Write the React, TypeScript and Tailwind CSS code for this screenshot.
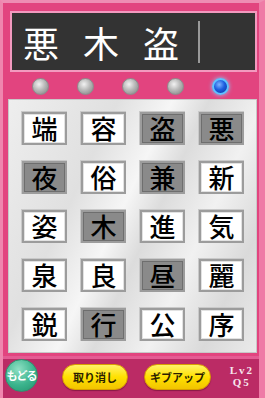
import React from 'react';

const ROWS: { ch: string; on?: boolean }[][] = [
  [{ ch: '端' }, { ch: '容' }, { ch: '盗', on: true }, { ch: '悪', on: true }],
  [{ ch: '夜', on: true }, { ch: '俗' }, { ch: '兼', on: true }, { ch: '新' }],
  [{ ch: '姿' }, { ch: '木', on: true }, { ch: '進' }, { ch: '気' }],
  [{ ch: '泉' }, { ch: '良' }, { ch: '昼', on: true }, { ch: '麗' }],
  [{ ch: '鋭' }, { ch: '行', on: true }, { ch: '公' }, { ch: '序' }],
];

const KANJI = { fontFamily: '"Noto Sans CJK JP", sans-serif' };

function Light({ active }: { active?: boolean }) {
  return (
    <div
      className={
        active
          ? 'w-[17px] h-[17px] rounded-full border-2 border-[#5fc2ff] bg-[radial-gradient(circle_at_40%_35%,#7fb4ff_0%,#1d5fe0_45%,#0a2f9a_100%)] shadow-[0_0_4px_#7fd0ff]'
          : 'w-[17px] h-[17px] rounded-full border border-[#8d8d8d] bg-[radial-gradient(circle_at_40%_35%,#f2f2f2_0%,#b9b9b9_45%,#7d7d7d_100%)]'
      }
    />
  );
}

function Tile({ ch, on }: { ch: string; on?: boolean }) {
  return (
    <div className="w-[46px] h-[34px] p-[2px] bg-[#9c9c9c] border-t border-l border-[#c9c9c9] border-b-[#777] border-r-[#777]">
      <div
        className={
          'w-full h-full flex items-center justify-center border ' +
          (on ? 'bg-[#8a8a8a] border-[#6e6e6e]' : 'bg-white border-[#e2e2e2]')
        }
      >
        <span className="text-[26px] leading-none text-black font-medium" style={KANJI}>
          {ch}
        </span>
      </div>
    </div>
  );
}

export default function App() {
  return (
    <div className="w-[265px] h-[398px] overflow-hidden flex flex-col bg-[#e2447f] border-t-[3px] border-t-[#ee8db3] border-l-[3px] border-l-[#ef86ae] border-r-[6px] border-r-[#ee7aa6]">
      {/* Display */}
      <div className="pt-[8px] pl-[7px] pr-[2px]">
        <div className="h-[61px] bg-[#333333] border-2 border-[#f29abf] flex items-center">
          <div className="flex items-center pl-[11px] gap-[24px] text-white text-[36px] leading-none" style={KANJI}>
            <span>悪</span>
            <span>木</span>
            <span>盗</span>
          </div>
          <div className="ml-[19px] w-[2px] h-[42px] bg-[#9a9a9a]" />
        </div>
      </div>

      {/* Progress lights */}
      <div className="h-[27px] pt-[2px] flex items-center pl-[29px] gap-[28px]">
        <Light />
        <Light />
        <Light />
        <Light />
        <Light active />
      </div>

      {/* Board */}
      <div className="ml-[5px] mr-[2px] h-[255px] border border-[#c8c8c8] bg-[linear-gradient(115deg,#eeeeee_0%,#e0e0e0_30%,#f6f6f6_45%,#dcdcdc_55%,#f1f1f1_70%,#dadada_85%,#eaeaea_100%)] pt-[11px] pl-[12px] flex flex-col gap-[15px]">
        {ROWS.map((row, i) => (
          <div key={i} className="flex gap-[13px]">
            {row.map((t) => (
              <Tile key={t.ch} ch={t.ch} on={t.on} />
            ))}
          </div>
        ))}
      </div>

      {/* Bottom bar */}
      <div className="mt-[3px] flex-1 bg-[#bb2b65] border-t-[3px] border-t-[#e45b93] flex items-center pl-[2px] pr-[4px] pb-[6px]">
        <div
          className="w-[33px] h-[33px] rounded-full bg-[radial-gradient(circle_at_40%_30%,#8fe0c4_0%,#3bb48d_55%,#23916c_100%)] border border-[#2f8f6f] flex items-center justify-center text-white text-[11px] font-bold tracking-[-1px]"
          style={KANJI}
        >
          もどる
        </div>
        <div
          className="ml-[24px] mt-[3px] w-[66px] h-[26px] rounded-full bg-[linear-gradient(180deg,#fff36a_0%,#ffe100_50%,#f2c400_100%)] border border-[#d99e00] shadow-[0_1px_1px_#8a1a45] flex items-center justify-center text-[11px] font-bold text-[#2a1e00]"
          style={KANJI}
        >
          取り消し
        </div>
        <div
          className="ml-[16px] mt-[3px] w-[67px] h-[26px] rounded-full bg-[linear-gradient(180deg,#fff36a_0%,#ffe100_50%,#f2c400_100%)] border border-[#d99e00] shadow-[0_1px_1px_#8a1a45] flex items-center justify-center text-[11px] font-bold text-[#2a1e00]"
          style={KANJI}
        >
          ギブアップ
        </div>
        <div
          className="ml-auto mr-[1px] mt-[2px] flex flex-col items-center gap-[1px] text-[#f7e6ee] text-[11px] font-bold leading-[11px]"
          style={{ fontFamily: '"Liberation Serif", serif' }}
        >
          <span className="tracking-[2px]">Lv2</span>
          <span className="tracking-[2px]">Q5</span>
        </div>
      </div>
    </div>
  );
}
